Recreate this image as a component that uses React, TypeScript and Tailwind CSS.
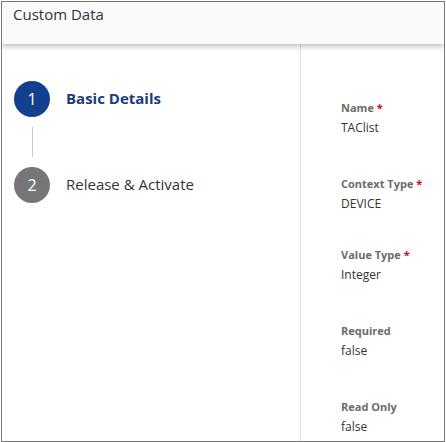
import React from 'react';

type Field = { label: string; value: string; required?: boolean; gap: string };

const fields: Field[] = [
  { label: 'Name', value: 'TAClist', required: true, gap: 'mb-[40px]' },
  { label: 'Context Type', value: 'DEVICE', required: true, gap: 'mb-[35px]' },
  { label: 'Value Type', value: 'Integer', required: true, gap: 'mb-[40px]' },
  { label: 'Required', value: 'false', gap: 'mb-[40px]' },
  { label: 'Read Only', value: 'false', gap: 'mb-0' },
];

function Step({ n, label, active }: { n: number; label: string; active?: boolean }) {
  return (
    <div className="flex items-center">
      <div
        className={[
          'w-9 h-9 rounded-full flex items-center justify-center text-white text-[16px] leading-none',
          active ? 'bg-[#133f8f]' : 'bg-[#767676]',
        ].join(' ')}
      >
        {n}
      </div>
      <span
        className={[
          'ml-4 mb-[3px] text-[15px] leading-5',
          active ? 'font-bold text-[#1b3b7a]' : 'text-[#333]',
        ].join(' ')}
      >
        {label}
      </span>
    </div>
  );
}

export default function App() {
  return (
    <div className="w-[446px] h-[442px] bg-white pt-px pl-px font-['Open_Sans',sans-serif]">
      <div className="w-[444px] h-[441px] border border-[#777] flex flex-col overflow-hidden">
        {/* Header */}
        <header className="relative z-10 h-[42px] flex-shrink-0 bg-[#fafafa] pl-[11px] pt-[2px] shadow-[0_3px_5px_rgba(0,0,0,0.22)]">
          <h1 className="text-[15px] leading-5 text-[#333]">Custom Data</h1>
        </header>

        <div className="flex flex-1 min-h-0">
          {/* LEFT: steps */}
          <div className="w-[299px] flex-shrink-0 border-r border-[#e0e0e0] pl-3 pt-[37px]">
            <Step n={1} label="Basic Details" active />
            <div className="ml-[17.5px] w-px h-[30px] my-[10px] bg-[#c8c8c8]" />
            <Step n={2} label="Release & Activate" />
          </div>

          {/* RIGHT: summary */}
          <div className="flex-1 pl-10 pt-[56px]">
            {fields.map((f) => (
              <div key={f.label} className={f.gap}>
                <div className="text-[11px] leading-4 font-bold text-[#6b6b6b]">
                  {f.label}
                  {f.required && <span className="text-[#d0021b]"> *</span>}
                </div>
                <div className="mt-[4px] text-[12px] leading-4 text-[#333]">{f.value}</div>
              </div>
            ))}
          </div>
        </div>
      </div>
    </div>
  );
}
